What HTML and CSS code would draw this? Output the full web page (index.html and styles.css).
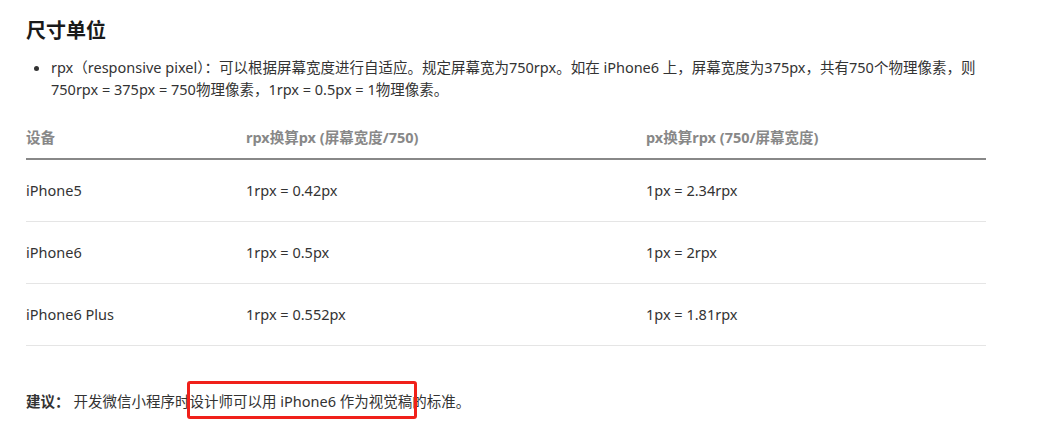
FILE: index.html
```html
<!DOCTYPE html>
<html lang="zh-CN">
<head>
    <meta charset="UTF-8">
    <meta name="viewport" content="width=device-width, initial-scale=1.0" />
    <title>尺寸单位</title>
    <link rel="stylesheet" href="styles.css">
</head>
<body>
    <main>
        <h2>尺寸单位</h2>
        <ul class="notes">
            <li>rpx（responsive pixel）：可以根据屏幕宽度进行自适应。规定屏幕宽为750rpx。如在 iPhone6 上，屏幕宽度为375px，共有750个物理像素，则 750rpx = 375px = 750物理像素，1rpx = 0.5px = 1物理像素。</li>
        </ul>
        <table>
            <thead>
                <tr>
                    <th class="col_device">设备</th>
                    <th class="col_rpx">rpx换算px (屏幕宽度/750)</th>
                    <th>px换算rpx (750/屏幕宽度)</th>
                </tr>
            </thead>
            <tbody>
                <tr>
                    <td>iPhone5</td>
                    <td>1rpx = 0.42px</td>
                    <td>1px = 2.34rpx</td>
                </tr>
                <tr>
                    <td>iPhone6</td>
                    <td>1rpx = 0.5px</td>
                    <td>1px = 2rpx</td>
                </tr>
                <tr>
                    <td>iPhone6 Plus</td>
                    <td>1rpx = 0.552px</td>
                    <td>1px = 1.81rpx</td>
                </tr>
            </tbody>
        </table>
        <div class="tip">
            <strong>建议：</strong>
            <span>开发微信小程序时</span>
            <span class="marked">设计师可以用 iPhone6 作为视觉稿</span>
            <span>的标准。</span>
        </div>
    </main>
</body>
</html>
```

FILE: styles.css
```css
html {
    font-family: "Noto Sans", "Noto Sans CJK SC", sans-serif;
    font-size: 14.5px;
    color: #333;
}

body {
    margin: 0;
    background-color: white;
}

main {
    width: 960px;
    padding: 18px 0 30px 26px;
}

h2 {
    margin: 0;
    font-size: 20px;
    line-height: 26px;
    font-weight: bold;
    color: #1a1a1a;
}

.notes {
    margin: 12px 0 0;
    padding-left: 25px;
    line-height: 22px;
}

table {
    width: 100%;
    margin-top: 17px;
    border-collapse: collapse;
    text-align: left;
}

th {
    font-weight: bold;
    color: #888;
    padding: 10px 0 11px;
    line-height: 20px;
    border-bottom: 2px solid #888;
}

.col_device {
    width: 220px;
}

.col_rpx {
    width: 400px;
}

td {
    padding: 20px 0 21px;
    line-height: 20px;
    border-bottom: 1px solid #e5e5e5;
}

.tip {
    display: flex;
    align-items: center;
    margin-top: 44px;
    height: 22px;
    line-height: 22px;
    white-space: nowrap;
}

.tip strong {
    margin-right: 4px;
}

.tip span {
    display: block;
    height: 22px;
}

.marked {
    position: relative;
}

.marked::after {
    content: "";
    position: absolute;
    box-sizing: border-box;
    left: -3px;
    right: -5px;
    top: -9px;
    height: 38px;
    border: 3px solid #f0201a;
    border-radius: 3px;
}
```
